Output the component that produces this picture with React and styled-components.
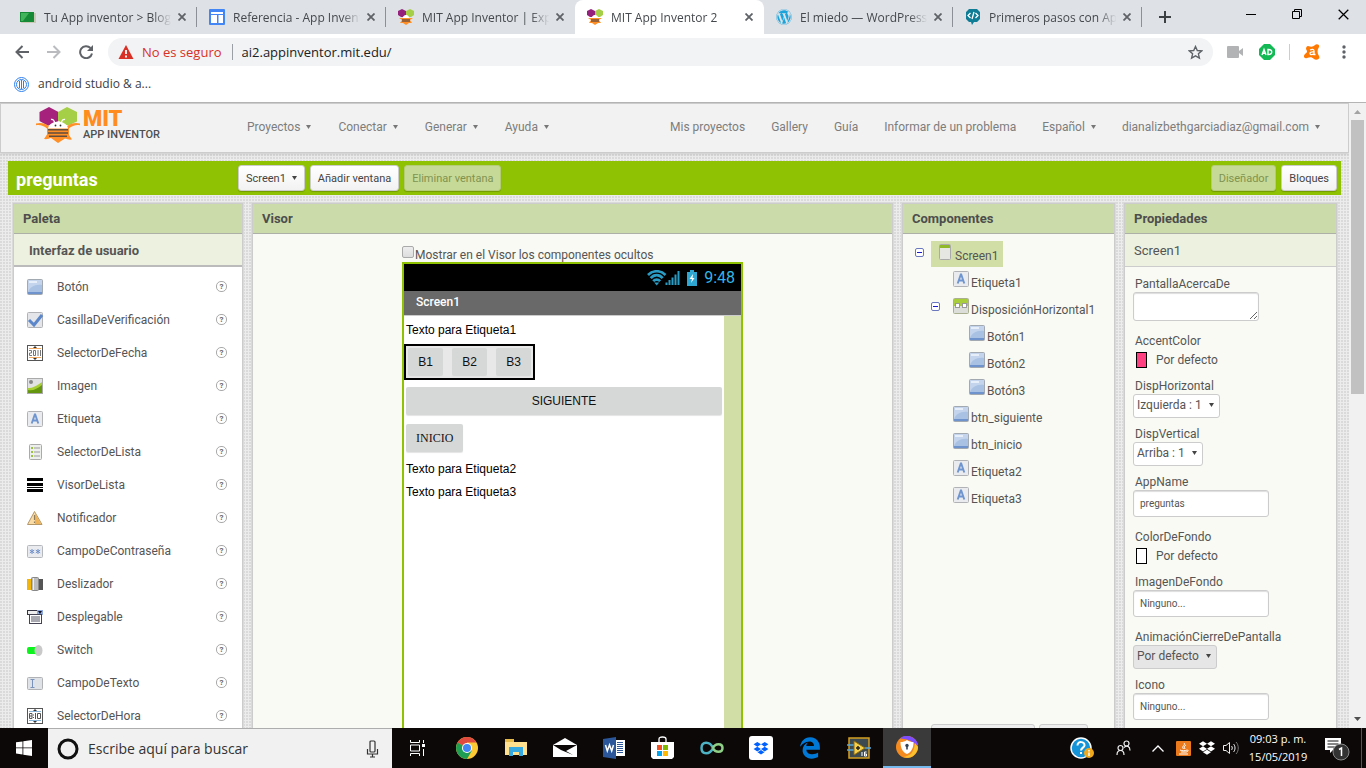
import React, { useState } from 'react';
import styled, { createGlobalStyle } from 'styled-components';
import { FaDropbox, FaEdgeLegacy, FaWordpress } from 'react-icons/fa';

const GlobalStyle = createGlobalStyle`
  * { box-sizing: border-box; }
  body {
    margin: 0;
    overflow: hidden;
    font-family: Roboto, sans-serif;
    font-size: 12px;
    color: #555;
  }
  button, input, select, textarea { font-family: inherit; font-size: inherit; color: inherit; }
  button { border: none; background: none; padding: 0; cursor: pointer; }
  svg { display: block; flex: none; }
  a { color: inherit; text-decoration: none; }
  ul { list-style: none; margin: 0; padding: 0; }
`;

const Desktop = styled.div`
  display: flex;
  flex-direction: column;
  height: 100vh;
`;

/* ---------- browser ---------- */

const Browser = styled.header`
  flex: none;
  font-family: "Open Sans", sans-serif;
  background: #fff;
  border-bottom: 1px solid #b4b4b4;
`;
const TabStrip = styled.div`
  display: flex;
  align-items: center;
  height: 34px;
  padding-left: 8px;
  background: #dee1e6;
`;
const TabBox = styled.div`
  display: flex;
  align-items: center;
  flex: 0 1 189px;
  min-width: 0;
  height: 34px;
  padding: 0 9px 0 12px;
  border-radius: ${p => (p.$active ? '8px 8px 0 0' : '0')};
  background: ${p => (p.$active ? '#fff' : 'linear-gradient(#8c9096, #8c9096) right center / 1px 20px no-repeat')};
  ${p => p.$plain && 'background: none;'}
`;
const TabTitle = styled.button`
  flex: 1;
  min-width: 0;
  margin: 0 2px 0 8px;
  overflow: hidden;
  white-space: nowrap;
  text-align: left;
  color: #45494d;
  mask-image: linear-gradient(to right, #000 84%, transparent 98%);
`;
const IconButton = styled.button`
  display: flex;
  align-items: center;
  justify-content: center;
  flex: none;
  width: ${p => p.$w || 32}px;
  height: ${p => p.$h || 28}px;
`;
const WindowButtons = styled.div`
  display: flex;
  margin-left: auto;
  align-self: flex-start;
`;
const Toolbar = styled.div`
  display: flex;
  align-items: center;
  height: 36px;
  padding: 0 6px;
`;
const Omnibox = styled.div`
  display: flex;
  align-items: center;
  flex: 1;
  height: 28px;
  margin: 0 6px;
  padding: 0 6px 0 10px;
  border-radius: 14px;
  background: #f1f3f4;
  font-size: 13px;
`;
const NotSecure = styled.span`
  margin-left: 8px;
  padding-right: 10px;
  border-right: 1px solid #9aa0a6;
  line-height: 16px;
  color: #d93025;
`;
const Url = styled.input`
  flex: 1;
  min-width: 0;
  padding: 0 0 0 9px;
  border: none;
  outline: none;
  background: none;
  color: #202124;
`;
const Divider = styled.span`
  width: 1px;
  height: 16px;
  margin: 0 6px;
  background: #cbcdd0;
`;
const Bookmarks = styled.nav`
  height: 32px;
  padding: 6px 14px 0;
`;
const Bookmark = styled.a`
  display: flex;
  align-items: center;
  gap: 9px;
  line-height: 16px;
  color: #3c4043;
`;

/* ---------- page ---------- */

const Viewport = styled.div`
  display: flex;
  flex: 1;
  min-height: 0;
`;
const Page = styled.div`
  display: flex;
  flex-direction: column;
  flex: 1;
  min-width: 0;
  overflow: hidden;
  background:
    radial-gradient(circle at 1px 1px, #dadada 1px, transparent 1px) 0 0 / 3px 3px,
    #ececec;
`;
const Scrollbar = styled.div`
  display: flex;
  flex-direction: column;
  align-items: center;
  justify-content: space-between;
  flex: none;
  width: 17px;
  padding: 7px 0;
  background: #f1f1f1;
`;
const Thumb = styled.div`
  flex: none;
  width: 13px;
  height: 274px;
  margin: 6px 0 auto;
  background: #c1c1c1;
`;
const Header = styled.div`
  display: flex;
  align-items: center;
  flex: none;
  height: 50px;
  padding: 0 28px 2px 35px;
  border: 1px solid #ccc;
  background: #f2f2f2;
  box-shadow: 0 1px 3px rgba(0, 0, 0, 0.15);
`;
const Brand = styled.a`
  display: flex;
  align-items: center;
  align-self: flex-start;
  gap: 3px;
  width: 211px;
  padding-top: 3px;
`;
const BrandText = styled.span`
  display: flex;
  flex-direction: column;
  color: #4f4f4f;
  font-size: 11px;
  font-weight: 500;
  line-height: 12px;
`;
const BrandName = styled.span`
  color: #ff8c1e;
  font-size: 22px;
  font-weight: 900;
  line-height: 20px;
`;
const Menu = styled.nav`
  display: flex;
  align-items: center;
  gap: ${p => p.$gap}px;
  color: #7d7d7d;
  ${p => p.$right && 'margin-left: auto;'}
`;
const MenuButton = styled.button`
  display: flex;
  align-items: center;
  gap: 6px;
  white-space: nowrap;
`;
const ProjectBar = styled.div`
  display: flex;
  align-items: center;
  flex: none;
  gap: 5px;
  height: 34px;
  margin: 8px 8px;
  padding: 0 4px 0 8px;
  background: #8fc202;
`;
const ProjectName = styled.h1`
  width: 217px;
  margin: 0;
  padding-top: 4px;
  color: #fff;
  font-size: 18px;
  line-height: 20px;
`;
const BarButton = styled.button`
  display: flex;
  align-items: center;
  justify-content: center;
  gap: 6px;
  height: 26px;
  padding: 0 7px;
  border: 1px solid #ccc;
  border-radius: 3px;
  background: linear-gradient(#fff, #f2f2f2);
  box-shadow: 0 1px 1px rgba(0, 0, 0, 0.2);
  color: #444;
  font-size: 11px;
  white-space: nowrap;
  &:disabled {
    border-color: #b4cc78;
    background: #c7d996;
    color: #7f9350;
    cursor: default;
  }
`;
const BarRight = styled.div`
  display: flex;
  gap: 5px;
  margin-left: auto;
`;

const Columns = styled.main`
  display: flex;
  flex: 1;
  gap: 9px;
  min-height: 0;
  padding: 0 12px 0 13px;
`;
const Panel = styled.section`
  display: flex;
  flex-direction: column;
  flex: ${p => (p.$width ? `0 0 ${p.$width}px` : '1')};
  min-width: 0;
  overflow: hidden;
  border: 1px solid #ccc;
  border-bottom: none;
  background: #f8faf3;
  box-shadow: 0 0 0 1px #dadada;
`;
const PanelTitle = styled.h2`
  flex: none;
  height: 30px;
  margin: 0;
  padding: 0 9px;
  border-bottom: 1px solid #adb0a6;
  background: #cbdba9;
  color: #4d4d4d;
  font-size: 13px;
  font-weight: 700;
  line-height: 29px;
`;
const SubTitle = styled.h3`
  flex: none;
  height: 33px;
  margin: 0;
  padding: 0 ${p => (p.$bold ? 15 : 9)}px;
  border-bottom: ${p => (p.$bold ? '2px solid #bbb' : '1px solid #ccc')};
  background: #ecf1e0;
  color: #555;
  font-size: 13px;
  font-weight: ${p => (p.$bold ? 700 : 400)};
  line-height: 33px;
`;
const PaletteList = styled.ul`
  flex: 1;
  min-height: 0;
  padding: 3px 15px 0 13px;
  overflow: hidden;
  background: #fff;
`;
const PaletteRow = styled.li`
  display: flex;
  align-items: center;
  gap: 14px;
  height: 33px;
`;
const HelpButton = styled.button`
  width: 11px;
  height: 11px;
  margin-left: auto;
  border: 1px solid #aaa;
  border-radius: 5px;
  color: #666;
  font-size: 8px;
  font-weight: 700;
  line-height: 9px;
`;

/* ---------- viewer ---------- */

const ViewerBody = styled.div`
  display: flex;
  flex-direction: column;
  align-items: center;
  flex: 1;
  min-height: 0;
  padding-top: 12px;
`;
const Mock = styled.div`
  display: flex;
  flex-direction: column;
  flex: 1;
  width: 341px;
`;
const HiddenToggle = styled.label`
  display: flex;
  flex: none;
  gap: 1px;
  height: 16px;
  line-height: 18px;
  input {
    appearance: none;
    width: 12px;
    height: 12px;
    margin: 0;
    border: 1px solid #aaa;
    border-radius: 2px;
    background: linear-gradient(#eee, #ddd);
  }
`;
const Phone = styled.div`
  display: flex;
  flex-direction: column;
  flex: 1;
  border: 2px solid #8fc202;
  border-bottom: none;
  background: #fff;
`;
const StatusBar = styled.div`
  display: flex;
  align-items: center;
  justify-content: flex-end;
  gap: 7px;
  height: 27px;
  padding-right: 6px;
  background: #000;
  color: #33b5e5;
  font-size: 16px;
`;
const TitleBar = styled.div`
  height: 24px;
  padding-left: 12px;
  background: #696969;
  color: #fff;
  font-weight: 500;
  line-height: 22px;
`;
const Screen = styled.div`
  display: flex;
  flex: 1;
  border-top: 1px solid #ccc;
`;
const ScreenContent = styled.div`
  display: flex;
  flex-direction: column;
  align-items: flex-start;
  flex: 1;
  padding-top: 3px;
  color: #000;
  font-family: "Liberation Sans", sans-serif;
`;
const Gutter = styled.div`
  width: 17px;
  background: #d1dfa6;
`;
const MockLabel = styled.p`
  margin: 0;
  padding: 0 2px;
  line-height: 23px;
`;
const MockRow = styled.div`
  display: flex;
  gap: 9px;
  margin: 2px 0 7px;
  padding: 2px;
  border: 2px solid #000;
  background: #e8e8e8;
`;
const MockButton = styled.button`
  min-width: 35px;
  width: ${p => (p.$fill ? 'calc(100% - 4px)' : 'auto')};
  height: 28px;
  margin: ${p => (p.$after ? `0 2px ${p.$after}px` : '0')};
  padding: 0 10px;
  border-radius: 2px;
  background: #d6d8d7;
  box-shadow: 0 1px 1px #e4e4e4;
  color: #111;
  ${p => p.$serif && 'font-family: "Liberation Serif", serif;'}
`;

/* ---------- component tree ---------- */

const Tree = styled.ul`
  flex: none;
  height: 490px;
  padding: 7px 12px 0;
`;
const TreeRow = styled.div`
  display: flex;
  height: 27px;
  padding-left: ${p => p.$level * 16}px;
`;
const Toggle = styled.button`
  display: flex;
  flex: none;
  width: 16px;
  padding-top: 7px;
`;
const TreeNode = styled.button`
  display: flex;
  gap: 2px;
  height: 26px;
  padding: 3px 5px 0 6px;
  background: ${p => (p.$selected ? '#d1dfa6' : 'none')};
  line-height: 24px;
`;
const TreeActions = styled.div`
  display: flex;
  flex: none;
  gap: 4px;
  padding-left: 28px;
`;
const ActionButton = styled.button`
  width: ${p => p.$width}px;
  height: 26px;
  border: 1px solid #ccc;
  border-radius: 3px;
  background: #eee;
`;

/* ---------- properties ---------- */

const Properties = styled.form`
  padding: 9px 8px 0;
`;
const Property = styled.div`
  display: flex;
  flex-direction: column;
  align-items: flex-start;
  margin-bottom: ${p => (p.$boxed ? 12 : 8)}px;
`;
const PropertyName = styled.label`
  padding-left: 2px;
  line-height: 16px;
`;
const TextBox = styled.input`
  width: 136px;
  height: 27px;
  padding: 0 6px;
  border: 1px solid #ccc;
  border-radius: 3px;
  background: #fff;
  box-shadow: inset 0 1px 1px #ddd;
  font-size: 10px;
`;
const TextArea = styled.textarea`
  display: block;
  width: 126px;
  height: 29px;
  border: 1px solid #ccc;
  border-radius: 3px;
  box-shadow: inset 0 1px 1px #ddd;
`;
const SelectBox = styled.span`
  position: relative;
  select {
    display: block;
    appearance: none;
    height: 24px;
    padding: 0 17px 2px 3px;
    border: 1px solid #ccc;
    border-radius: 3px;
    background: ${p => (p.$grey ? '#e6e6e6' : '#fff')};
  }
  svg {
    position: absolute;
    top: 9px;
    right: 6px;
    pointer-events: none;
  }
`;
const ColorPick = styled.button`
  display: flex;
  align-items: center;
  gap: 9px;
  height: 21px;
  padding-left: 3px;
`;
const Swatch = styled.span`
  width: 11px;
  height: 16px;
  border: 1px solid #000;
  background: ${p => p.$color};
`;

/* ---------- taskbar ---------- */

const Taskbar = styled.footer`
  display: flex;
  flex: none;
  height: 40px;
  background: #0c0808;
  color: #fff;
  font-family: "Open Sans", sans-serif;
`;
const TaskButton = styled.button`
  display: flex;
  align-items: center;
  justify-content: center;
  flex: none;
  width: ${p => p.$w || 49}px;
  height: 40px;
  color: #fff;
  ${p => p.$active && `
    background: #3a3a3a;
    border-bottom: 2px solid #76b9ed;
  `}
`;
const SearchBox = styled.label`
  display: flex;
  align-items: center;
  flex: none;
  gap: 9px;
  width: 344px;
  padding: 0 13px 0 9px;
  border-top: 1px solid #adadad;
  background: #f1f1f1;
  input {
    flex: 1;
    min-width: 0;
    padding: 0;
    border: none;
    outline: none;
    background: none;
    color: #222;
    font-size: 14px;
  }
  input::placeholder { color: #333; opacity: 1; }
`;
const Tray = styled.div`
  display: flex;
  align-items: center;
  margin-left: auto;
`;
const Clock = styled.button`
  width: 70px;
  color: #fff;
  font-size: 11px;
  line-height: 18px;
`;
const PeekEdge = styled.span`
  width: 5px;
  height: 40px;
  border-left: 1px solid #555;
`;

/* ---------- drawings ---------- */

const Caret = ({ color = '#777' }) => (
  <svg width="5" height="4" viewBox="0 0 5 4"><path d="M0 0h5L2.500 4z" fill={color} /></svg>
);
const Cross = ({ size = 8, width = 1.800, color = '#5f6368' }) => (
  <svg width={size} height={size} viewBox="0 0 8 8" stroke={color} strokeWidth={width}><path d="M.5.5l7 7M7.500.5l-7 7" /></svg>
);

const BeeLogo = ({ size = 44 }) => (
  <svg width={size} height={size * 36 / 44} viewBox="0 0 44 36">
    <path d="M13 0l9.500 5v9l-8 4.500h-3L3.500 14V5z" fill="#a6217c" />
    <path d="M31 0l10 5v9.500L33 18h-3l-8-4.500V5z" fill="#a5cf47" />
    <path d="M0 16.500c5-1.500 9 0 13 2.500h18c4-2.500 8-4 13-2.500v1.800c-4-.8-8 .7-11 3.200v6.500l3 4.500c-3 .5-5-.5-7-1L22 36l-7-5c-2 .5-4 1.500-7 1l3-4.500V21.500c-3-2.500-7-4-11-3.200z" fill="#ff8f26" />
    <path d="M12 21.500c1-9 19-9 20 0z" fill="#fff" />
    <path d="M15 12.500c2-.5 3.500 1 3.500 3.500M29 12.500c-2-.5-3.500 1-3.500 3.500" stroke="#fff" strokeWidth="1.400" fill="none" />
    <circle cx="19.500" cy="18.500" r=".9" fill="#333" /><circle cx="24.500" cy="18.500" r=".9" fill="#333" />
    <path d="M12 22.700h20M12 26h20M13 29.300h18" stroke="#5f4d3d" strokeWidth="1.400" />
  </svg>
);

const FAVICONS = {
  blog: (
    <svg width="16" height="16" viewBox="0 0 16 16">
      <rect x="1" y="4" width="15" height="10" fill="#c9c9b5" />
      <rect x="0" y="3" width="14" height="10" fill="#168a36" />
      <path d="M1 4h8L3 12H1z" fill="#42b55c" />
    </svg>
  ),
  sites: (
    <svg width="16" height="16" viewBox="0 0 16 16">
      <rect width="16" height="16" rx="1" fill="#4285f4" />
      <path d="M2 3h12v2H2zM2 6h6v8H2zM9.500 6H14v8H9.500z" fill="#fff" />
    </svg>
  ),
  bee: (
    <svg width="16" height="16" viewBox="0 0 16 16">
      <path d="M0 2l4-2 4 2v4L5 8H3L0 6z" fill="#94217c" />
      <path d="M8 2l4-2 4 2v4l-3 2h-2L8 6z" fill="#a5cf47" />
      <path d="M1 9h14l-3 2 2 3h-3l-3 2-3-2H2l2-3z" fill="#ff8f26" />
      <path d="M5 9c0-4 6-4 6 0z" fill="#fff" />
      <path d="M4 10h8v3H4z" fill="#9a6134" />
    </svg>
  ),
  wordpress: <FaWordpress size={16} color="#1ba3dc" />,
  code: (
    <svg width="16" height="16" viewBox="0 0 16 16">
      <path d="M4 0h8l3 3v7l-3 3h-3l-2 3-1-3H4l-3-3V3z" fill="#0f7d96" />
      <path d="M5.500 4L3 6.500 5.500 9M10.500 4L13 6.500 10.500 9M9 3L7 10" stroke="#fff" strokeWidth="1.300" fill="none" />
    </svg>
  ),
};

const GLYPHS = {
  button: (
    <g>
      <rect x=".5" y=".5" width="15" height="15" rx="1" fill="#a9c1e3" stroke="#a3a9b0" />
      <path d="M1 1h14v5C8 5 3 8 1 13z" fill="#c3d4ec" />
      <path d="M2 2h8v2H2z" fill="#e6eef9" />
      <path d="M1 13h14v2H1z" fill="#6f93cd" />
    </g>
  ),
  label: (
    <g>
      <rect x=".5" y=".5" width="15" height="15" rx="1" fill="#e9ebee" stroke="#b0b2b5" />
      <path d="M4.700 12.500L7.800 3.500h.4l3.100 9M5.800 9.500h4.400" stroke="#6f95d0" strokeWidth="1.900" fill="none" />
    </g>
  ),
  check: (
    <g>
      <rect x=".5" y=".5" width="15" height="15" rx="1" fill="#e3e5e8" stroke="#b0b2b5" />
      <path d="M2 8l5 5 8-10" stroke="#5b86c9" strokeWidth="3" fill="none" />
    </g>
  ),
  date: (
    <g fill="none">
      <rect x=".5" y=".5" width="15" height="15" fill="#fff" stroke="#555" />
      <path d="M2 3.500h12M2 12.500h12" stroke="#f0a860" />
      <path d="M6 3l2-2 2 2zM6 13l2 2 2-2z" fill="#333" />
      <path d="M2 5.500h2.500v2.500H2.500v2.500H5M6.500 5.500h2v5h-2zM11 5v6M13.500 5v6" stroke="#777" />
    </g>
  ),
  image: (
    <g>
      <rect x=".5" y=".5" width="15" height="15" fill="#e0e2e3" stroke="#aaa" />
      <circle cx="4" cy="4" r="2" fill="#888" />
      <path d="M1 10c5 0 8-2 14-6v11H1z" fill="#a8cf35" />
      <path d="M1 12c5 1 9-1 14-5v8H1z" fill="#64970f" />
    </g>
  ),
  list: (
    <g>
      <rect x="2.500" y=".5" width="12" height="15" rx="1" fill="#edefed" stroke="#aaa" />
      <path d="M4 3h2v2H4zM4 7h2v2H4zM4 11h2v2H4z" fill="#9cc33b" />
      <path d="M7 4h6M7 8h6M7 12h6" stroke="#999" />
    </g>
  ),
  listView: <path d="M0 1h16v3H0zM0 6h16v3H0zM0 10h16v1H0zM0 12h16v3H0z" fill="#000" />,
  warning: (
    <g>
      <path d="M7.500 1.500L15 14.500H.5z" fill="#f9dca6" stroke="#b59868" />
      <path d="M8 3l6 11H8z" fill="#efb45a" />
      <path d="M7.500 5v5M7.500 11.500v1.500" stroke="#8f7c5b" strokeWidth="1.200" />
    </g>
  ),
  password: (
    <g>
      <rect x=".5" y="2.500" width="15" height="12" rx="1" fill="#e9ebee" stroke="#b5b8bc" />
      <path d="M5 6v5M2.800 7.200l4.400 2.600M7.200 7.200L2.800 9.800M11 6v5M8.800 7.200l4.400 2.600M13.200 7.200L8.800 9.800" stroke="#6f8fc9" />
    </g>
  ),
  slider: (
    <g>
      <rect x="0" y="3" width="5" height="11" fill="#f2b50c" />
      <rect x="11" y="3" width="5" height="11" fill="#555" />
      <rect x="4.500" y="1.500" width="7" height="13" rx="1" fill="#bbb" stroke="#888" />
      <path d="M6.500 2v12" stroke="#eee" />
    </g>
  ),
  spinner: (
    <g>
      <rect x=".5" y="1.500" width="14" height="4" fill="#eee" stroke="#334" />
      <rect x="10" y="1" width="6" height="5" fill="#8fa9dd" />
      <path d="M11 2h4l-2 3z" fill="#112" />
      <rect x="2.500" y="5.500" width="12" height="9" fill="#fff" stroke="#445" />
      <path d="M4 8h9M4 10h9M4 12h9" stroke="#556" />
    </g>
  ),
  toggle: (
    <g>
      <rect x="0" y="5" width="11" height="7" rx="2" fill="#0bf41b" />
      <ellipse cx="11.500" cy="8.500" rx="4" ry="5.500" fill="#c9c9c9" />
    </g>
  ),
  textBox: (
    <g>
      <rect x=".5" y="2.500" width="15" height="12" rx="1" fill="#dfe2e6" stroke="#b0b2b5" />
      <path d="M3.500 4.500h4M5.500 4.500v8M3.500 12.500h4" stroke="#7a93bd" />
    </g>
  ),
  time: (
    <g fill="none">
      <rect x=".5" y=".5" width="15" height="15" fill="#fff" stroke="#555" />
      <path d="M2 3.500h12M2 12.500h12" stroke="#89b4d8" />
      <path d="M6 3l2-2 2 2zM6 13l2 2 2-2z" fill="#333" />
      <path d="M2.500 5.500h2.500v5H2.500zM2.500 8h2.500M6.500 6.500v1M6.500 9v1M8.500 5v6M10.500 5.500h3v5h-3z" stroke="#555" />
    </g>
  ),
  screen: (
    <g>
      <rect x="2.500" y=".5" width="11" height="15" rx="1" fill="#e6e6e2" stroke="#aaa" />
      <path d="M3 1h10v3H3z" fill="#8fb927" />
    </g>
  ),
  arrangement: (
    <g>
      <rect x=".5" y=".5" width="15" height="15" rx="1" fill="#dcdeda" stroke="#aab08f" />
      <path d="M1 1h14v7H1z" fill="#a9ce3c" />
      <rect x="2.500" y="5.500" width="4" height="4" fill="#fff" stroke="#999" />
      <rect x="9.500" y="5.500" width="4" height="4" fill="#fff" stroke="#999" />
    </g>
  ),
};
const Glyph = ({ name }) => <svg width="16" height="16" viewBox="0 0 16 16">{GLYPHS[name]}</svg>;

/* ---------- data ---------- */

const TABS = [
  { icon: 'blog', title: 'Tu App inventor > Blog' },
  { icon: 'sites', title: 'Referencia - App Invent' },
  { icon: 'bee', title: 'MIT App Inventor | Expl', plain: true },
  { icon: 'bee', title: 'MIT App Inventor 2', active: true },
  { icon: 'wordpress', title: 'El miedo — WordPress.' },
  { icon: 'code', title: 'Primeros pasos con App' },
];

const PALETTE = [
  ['button', 'Botón'],
  ['check', 'CasillaDeVerificación'],
  ['date', 'SelectorDeFecha'],
  ['image', 'Imagen'],
  ['label', 'Etiqueta'],
  ['list', 'SelectorDeLista'],
  ['listView', 'VisorDeLista'],
  ['warning', 'Notificador'],
  ['password', 'CampoDeContraseña'],
  ['slider', 'Deslizador'],
  ['spinner', 'Desplegable'],
  ['toggle', 'Switch'],
  ['textBox', 'CampoDeTexto'],
  ['time', 'SelectorDeHora'],
];

const NODES = [
  { name: 'Screen1', icon: 'screen', level: 0, open: true },
  { name: 'Etiqueta1', icon: 'label', level: 1 },
  { name: 'DisposiciónHorizontal1', icon: 'arrangement', level: 1, open: true },
  { name: 'Botón1', icon: 'button', level: 2 },
  { name: 'Botón2', icon: 'button', level: 2 },
  { name: 'Botón3', icon: 'button', level: 2 },
  { name: 'btn_siguiente', icon: 'button', level: 1 },
  { name: 'btn_inicio', icon: 'button', level: 1 },
  { name: 'Etiqueta2', icon: 'label', level: 1 },
  { name: 'Etiqueta3', icon: 'label', level: 1 },
];

const PROPERTIES = [
  { name: 'PantallaAcercaDe', type: 'area' },
  { name: 'AccentColor', type: 'color', value: '#ff4081' },
  { name: 'DispHorizontal', type: 'select', value: 'Izquierda : 1' },
  { name: 'DispVertical', type: 'select', value: 'Arriba : 1' },
  { name: 'AppName', type: 'text', value: 'preguntas' },
  { name: 'ColorDeFondo', type: 'color', value: '#fff' },
  { name: 'ImagenDeFondo', type: 'text', value: 'Ninguno...' },
  { name: 'AnimaciónCierreDePantalla', type: 'select', value: 'Por defecto', grey: true },
  { name: 'Icono', type: 'text', value: 'Ninguno...' },
];

/* ---------- parts ---------- */

function BrowserChrome() {
  return (
    <Browser>
      <TabStrip>
        {TABS.map(tab => (
          <TabBox key={tab.title} $active={tab.active} $plain={tab.plain}>
            {FAVICONS[tab.icon]}
            <TabTitle>{tab.title}</TabTitle>
            <IconButton $w={12} aria-label="Cerrar pestaña"><Cross /></IconButton>
          </TabBox>
        ))}
        <IconButton $w={46} aria-label="Nueva pestaña">
          <svg width="12" height="12" viewBox="0 0 12 12"><path d="M6 0v12M0 6h12" stroke="#3c4043" strokeWidth="2" /></svg>
        </IconButton>
        <WindowButtons>
          <IconButton $w={46} aria-label="Minimizar">
            <svg width="10" height="10" viewBox="0 0 10 10"><path d="M0 5.500h10" stroke="#000" /></svg>
          </IconButton>
          <IconButton $w={46} aria-label="Restaurar">
            <svg width="10" height="10" viewBox="0 0 10 10" fill="none" stroke="#000"><path d="M.5 2.500h7v7h-7zM2.500 2.500v-2h7v7h-2" /></svg>
          </IconButton>
          <IconButton $w={46} aria-label="Cerrar"><Cross size={11} width={0.9} color="#000" /></IconButton>
        </WindowButtons>
      </TabStrip>
      <Toolbar>
        <IconButton aria-label="Atrás">
          <svg width="14" height="14" viewBox="0 0 14 14" fill="none" stroke="#5f6368" strokeWidth="2"><path d="M14 7H1.500M7.500 1l-6 6 6 6" /></svg>
        </IconButton>
        <IconButton aria-label="Adelante">
          <svg width="14" height="14" viewBox="0 0 14 14" fill="none" stroke="#b9bbbe" strokeWidth="2"><path d="M0 7h12.500M6.500 1l6 6-6 6" /></svg>
        </IconButton>
        <IconButton aria-label="Recargar">
          <svg width="14" height="14" viewBox="0 0 14 14"><path d="M11.500 3A6 6 0 1 0 13 8.500" stroke="#5f6368" strokeWidth="2" fill="none" /><path d="M14 0v6H8z" fill="#5f6368" /></svg>
        </IconButton>
        <Omnibox>
          <svg width="16" height="14" viewBox="0 0 16 14"><path d="M8 0l7.500 14H.5z" fill="#d93025" /><path d="M8 5v4M8 10.500v2" stroke="#fff" strokeWidth="1.800" /></svg>
          <NotSecure>No es seguro</NotSecure>
          <Url aria-label="Dirección" defaultValue="ai2.appinventor.mit.edu/" />
          <IconButton $w={24} aria-label="Añadir a marcadores">
            <svg width="15" height="15" viewBox="0 0 15 15" fill="none" stroke="#5f6368" strokeWidth="1.400"><path d="M7.500 1.500l1.800 4 4.400.4-3.300 2.900 1 4.300-3.900-2.300-3.900 2.300 1-4.300L1.300 5.900l4.400-.4z" /></svg>
          </IconButton>
        </Omnibox>
        <IconButton aria-label="Cámara">
          <svg width="16" height="12" viewBox="0 0 16 12" fill="#b1b3b5"><rect width="12" height="12" rx="1" /><path d="M12 5l4-3v8l-4-3z" /></svg>
        </IconButton>
        <IconButton aria-label="Bloqueador">
          <svg width="16" height="16" viewBox="0 0 16 16"><path d="M5 0h6l5 5v6l-5 5H5l-5-5V5z" fill="#13b955" /><path d="M3 11l2-5.500L7 11M3.800 9.200h2.500M9 5.500v5c5 .5 5-5.500 0-5z" stroke="#fff" strokeWidth="1.400" fill="none" /></svg>
        </IconButton>
        <Divider />
        <IconButton aria-label="Avast">
          <svg width="16" height="16" viewBox="0 0 16 16"><path d="M4 2c3 1 5 1 7-1 2-2 5 0 4 2-2 3-2 6 0 9 2 3-3 5-5 3-2-2-4-2-7-1-3 1-4-2-2-4 3-2 2-3 1-5 0-2 1-3 2-3z" fill="#ff7800" /><path d="M6 6c2-1 4-1 4 1v3.500h1.500M10 8c-5-1-5 3-2 2.500 1 0 2-1 2-1.500" stroke="#fff" strokeWidth="1.300" fill="none" /></svg>
        </IconButton>
        <IconButton aria-label="Menú">
          <svg width="4" height="14" viewBox="0 0 4 14" fill="#5f6368"><circle cx="2" cy="2" r="1.700" /><circle cx="2" cy="7" r="1.700" /><circle cx="2" cy="12" r="1.700" /></svg>
        </IconButton>
      </Toolbar>
      <Bookmarks>
        <Bookmark href="#">
          <svg width="15" height="15" viewBox="0 0 15 15" fill="none" stroke="#2f80ed"><circle cx="7.500" cy="7.500" r="7" /><circle cx="7.500" cy="7.500" r="5" /><path d="M5.500 4v7M7.500 3v9M9.500 4v7" /></svg>
          android studio &amp; a...
        </Bookmark>
      </Bookmarks>
    </Browser>
  );
}

function AppHeader() {
  return (
    <Header>
      <Brand href="#">
        <BeeLogo />
        <BrandText>
          <BrandName>MIT</BrandName>
          APP INVENTOR
        </BrandText>
      </Brand>
      <Menu $gap={27}>
        {['Proyectos', 'Conectar', 'Generar', 'Ayuda'].map(name => (
          <MenuButton key={name}>{name}<Caret /></MenuButton>
        ))}
      </Menu>
      <Menu $gap={26} $right>
        <a href="#">Mis proyectos</a>
        <a href="#">Gallery</a>
        <a href="#">Guía</a>
        <a href="#">Informar de un problema</a>
        <MenuButton>Español<Caret /></MenuButton>
        <MenuButton>dianalizbethgarciadiaz@gmail.com<Caret /></MenuButton>
      </Menu>
    </Header>
  );
}

function Viewer() {
  return (
    <Panel>
      <PanelTitle>Visor</PanelTitle>
      <ViewerBody>
        <Mock>
          <HiddenToggle>
            <input type="checkbox" />
            Mostrar en el Visor los componentes ocultos
          </HiddenToggle>
          <Phone>
            <StatusBar>
              <svg width="33" height="16" viewBox="0 0 33 16" fill="none" stroke="#2a9cc4" strokeWidth="2.700">
                <path d="M1 5c5-5 12.500-5 17.500 0M3.700 8.200c3.500-4 8.500-4 12 0M6.200 11.200c2-2.200 5-2.200 7 0" />
                <path d="M7.200 12.500l2.500 3 2.500-3z" fill="#2a9cc4" stroke="none" />
                <path d="M19.500 15v-2.500M22.500 15v-5M25.500 15V7.500M28.500 15V4.500M31.500 15V1" strokeWidth="2" />
              </svg>
              <svg width="10" height="16" viewBox="0 0 10 16"><path d="M3 0h4v2h3v14H0V2h3z" fill="#2fa6d2" /><path d="M6 4L2.500 9H5l-1 4 3.500-5H5.500z" fill="#fff" /></svg>
              9:48
            </StatusBar>
            <TitleBar>Screen1</TitleBar>
            <Screen>
              <ScreenContent>
                <MockLabel>Texto para Etiqueta1</MockLabel>
                <MockRow>
                  <MockButton>B1</MockButton>
                  <MockButton>B2</MockButton>
                  <MockButton>B3</MockButton>
                </MockRow>
                <MockButton $fill $after={9}>SIGUIENTE</MockButton>
                <MockButton $serif $after={6}>INICIO</MockButton>
                <MockLabel>Texto para Etiqueta2</MockLabel>
                <MockLabel>Texto para Etiqueta3</MockLabel>
              </ScreenContent>
              <Gutter />
            </Screen>
          </Phone>
        </Mock>
      </ViewerBody>
    </Panel>
  );
}

function ComponentTree() {
  const [selected, setSelected] = useState('Screen1');
  return (
    <Panel $width={213}>
      <PanelTitle>Componentes</PanelTitle>
      <Tree>
        {NODES.map(node => (
          <li key={node.name}>
            <TreeRow $level={node.level}>
              <Toggle as={node.open ? 'button' : 'span'} aria-label={node.open ? 'Contraer' : undefined}>
                {node.open && (
                  <svg width="9" height="9" viewBox="0 0 9 9"><rect x=".5" y=".5" width="8" height="8" rx="1.500" fill="#fff" stroke="#6b78bd" /><path d="M2 4.500h5" stroke="#1a1ad0" /></svg>
                )}
              </Toggle>
              <TreeNode $selected={node.name === selected} onClick={() => setSelected(node.name)}>
                <Glyph name={node.icon} />
                {node.name}
              </TreeNode>
            </TreeRow>
          </li>
        ))}
      </Tree>
      <TreeActions>
        <ActionButton $width={104} aria-label="Cambiar nombre" />
        <ActionButton $width={49} aria-label="Borrar" />
      </TreeActions>
    </Panel>
  );
}

function PropertyEditor({ property }) {
  const { name, type, value, grey } = property;
  if (type === 'area') return <TextArea id={name} />;
  if (type === 'text') return <TextBox id={name} defaultValue={value} />;
  if (type === 'color') {
    return <ColorPick type="button" id={name}><Swatch $color={value} />Por defecto</ColorPick>;
  }
  return (
    <SelectBox $grey={grey}>
      <select id={name}><option>{value}</option></select>
      <Caret color="#444" />
    </SelectBox>
  );
}

export default function App() {
  return (
    <Desktop>
      <GlobalStyle />
      <BrowserChrome />
      <Viewport>
        <Page>
          <AppHeader />
          <ProjectBar>
            <ProjectName>preguntas</ProjectName>
            <BarButton>Screen1<Caret color="#444" /></BarButton>
            <BarButton>Añadir ventana</BarButton>
            <BarButton disabled>Eliminar ventana</BarButton>
            <BarRight>
              <BarButton disabled>Diseñador</BarButton>
              <BarButton>Bloques</BarButton>
            </BarRight>
          </ProjectBar>
          <Columns>
            <Panel $width={230}>
              <PanelTitle>Paleta</PanelTitle>
              <SubTitle $bold>Interfaz de usuario</SubTitle>
              <PaletteList>
                {PALETTE.map(([icon, name]) => (
                  <PaletteRow key={name}>
                    <Glyph name={icon} />
                    {name}
                    <HelpButton aria-label={`Ayuda de ${name}`}>?</HelpButton>
                  </PaletteRow>
                ))}
              </PaletteList>
            </Panel>
            <Viewer />
            <ComponentTree />
            <Panel $width={213}>
              <PanelTitle>Propiedades</PanelTitle>
              <SubTitle>Screen1</SubTitle>
              <Properties>
                {PROPERTIES.map(property => (
                  <Property key={property.name} $boxed={property.type === 'text' || property.type === 'area'}>
                    <PropertyName htmlFor={property.name}>{property.name}</PropertyName>
                    <PropertyEditor property={property} />
                  </Property>
                ))}
              </Properties>
            </Panel>
          </Columns>
        </Page>
        <Scrollbar>
          <svg width="7" height="4" viewBox="0 0 7 4"><path d="M0 4h7L3.500 0z" fill="#a3a3a3" /></svg>
          <Thumb />
          <svg width="7" height="4" viewBox="0 0 7 4"><path d="M0 0h7L3.500 4z" fill="#505050" /></svg>
        </Scrollbar>
      </Viewport>
      <Taskbar>
        <TaskButton $w={48} aria-label="Inicio">
          <svg width="16" height="16" viewBox="0 0 16 16" fill="#fff"><path d="M0 2.300l6.500-.9v6.100H0zM7.300 1.200L16 0v7.500H7.300zM0 8.300h6.500v6.200L0 13.600zM7.300 8.300H16V16l-8.700-1.300z" /></svg>
        </TaskButton>
        <SearchBox>
          <svg width="22" height="22" viewBox="0 0 22 22"><circle cx="11" cy="11" r="9" fill="none" stroke="#111" strokeWidth="3" /></svg>
          <input placeholder="Escribe aquí para buscar" aria-label="Buscar" />
          <svg width="13" height="18" viewBox="0 0 13 18" fill="none" stroke="#333" strokeWidth="1.200"><rect x="4" y="1" width="5" height="11" rx="1" /><path d="M1.500 9v5h10V9M6.500 14v3M4 17h5" /></svg>
        </SearchBox>
        <TaskButton $w={50} aria-label="Vista de tareas">
          <svg width="17" height="16" viewBox="0 0 17 16" fill="none" stroke="#fff"><path d="M1.500 0v2.500h9V0M1.500 16v-2.500h9V16M1.500 5h9v6h-9zM14.500 0v3M14.500 9v7" /><path d="M13 4h3v3h-3z" fill="#fff" stroke="none" /></svg>
        </TaskButton>
        <TaskButton aria-label="Chrome">
          <svg width="22" height="22" viewBox="0 0 22 22">
            <circle cx="11" cy="11" r="11" fill="#fcc934" />
            <path d="M11 11L1.500 5.500A11 11 0 0 1 20.500 5.500H11z" fill="#e04a3f" />
            <path d="M1.500 5.500A11 11 0 0 0 11 22l4.800-8.300L11 11z" fill="#1e9d55" />
            <circle cx="11" cy="11" r="5" fill="#fff" /><circle cx="11" cy="11" r="4" fill="#4285f4" />
          </svg>
        </TaskButton>
        <TaskButton aria-label="Explorador">
          <svg width="22" height="20" viewBox="0 0 22 20"><path d="M0 1h9v3h13v13H0z" fill="#e6b94b" /><path d="M0 4h22v13H0z" fill="#ffe08f" /><path d="M4 9h14v9h-4v-4H8v4H4z" fill="#36a9e1" /></svg>
        </TaskButton>
        <TaskButton aria-label="Correo">
          <svg width="24" height="20" viewBox="0 0 24 20"><path d="M0 7l12-7 12 7v12H0z" fill="#fff" /><path d="M0 7h24l-11 6 7 4L8 12z" fill="#0c0808" /></svg>
        </TaskButton>
        <TaskButton aria-label="Word">
          <svg width="22" height="22" viewBox="0 0 22 22"><path d="M12 3h10v16H12z" fill="#fff" /><path d="M14 5.500h6M14 7.500h6M14 9.500h6M14 11.500h6M14 13.500h6M14 15.500h6" stroke="#2b579a" /><path d="M0 2l13-2v22L0 20z" fill="#2b579a" /><path d="M2.500 8L4.300 14 6.500 8l2.200 6L10.500 8" stroke="#fff" strokeWidth="1.500" fill="none" /></svg>
        </TaskButton>
        <TaskButton aria-label="Tienda">
          <svg width="23" height="24" viewBox="0 0 23 24"><path d="M8 6V3q0-2 3.500-2T15 3v3" stroke="#fff" fill="none" strokeWidth="1.300" /><path d="M0 6h23v15l-2 2H2l-2-2z" fill="#fff" /><path d="M6 9h5v5H6z" fill="#f25022" /><path d="M12 9h5v5h-5z" fill="#7fba00" /><path d="M6 15h5v5H6z" fill="#00a4ef" /><path d="M12 15h5v5h-5z" fill="#ffb900" /></svg>
        </TaskButton>
        <TaskButton aria-label="CmapTools">
          <svg width="24" height="14" viewBox="0 0 24 14" fill="none" strokeWidth="2.500"><path d="M13 7C10 14 1.500 14 1.500 7S10 0 13 7" stroke="#4db3c4" /><path d="M13 7c2 5 9.500 5 9.500 0s-7.500-5-9.500 0" stroke="#8fcf86" /></svg>
        </TaskButton>
        <TaskButton aria-label="Dropbox">
          <svg width="24" height="24" viewBox="0 0 24 24"><rect width="24" height="24" rx="3" fill="#fff" /><path d="M8.300 6l3.700 2.300-3.700 2.400-3.700-2.400zM15.700 6l3.700 2.300-3.700 2.400L12 8.300zM8.300 10.700l3.700 2.400-3.700 2.300-3.700-2.300zM15.700 10.700l3.700 2.400-3.700 2.300-3.700-2.300zM12 14l3.500 2.200L12 18.500l-3.500-2.300z" fill="#0061ff" /></svg>
        </TaskButton>
        <TaskButton aria-label="Edge"><FaEdgeLegacy size={22} color="#0078d7" /></TaskButton>
        <TaskButton aria-label="LabVIEW">
          <svg width="24" height="22" viewBox="0 0 24 22"><rect x="2" y="1" width="20" height="20" fill="#3d4a50" stroke="#d5a021" strokeWidth="1.500" /><path d="M0 8h7M0 13h7M17 11h7" stroke="#58a6d8" strokeWidth="1.500" /><path d="M7 4l11 7-11 7z" fill="#f5d04b" stroke="#8b6b12" /><path d="M9 11h4M11 9v4" stroke="#222" strokeWidth="1.500" /><path d="M15 15v4M17.500 15v4h2v-2h-2M17.500 15h2" stroke="#fff" fill="none" /></svg>
        </TaskButton>
        <TaskButton $w={48} $active aria-label="Avast Browser">
          <svg width="22" height="22" viewBox="0 0 22 22">
            <circle cx="11" cy="11" r="11" fill="#f58a1f" />
            <path d="M4 2.500A11 11 0 0 1 22 11c-3-5-10-8-18-8.500z" fill="#7c4dff" />
            <path d="M22 11a11 11 0 0 1-15 10c7-1 11-4 12-14z" fill="#fbc02d" />
            <path d="M11 4c2 1.500 4 2 6.500 2 0 6-2 10-6.500 12-4.500-2-6.500-6-6.500-12C7 6 9 5.500 11 4z" fill="#fff" />
            <circle cx="11" cy="9.500" r="1.700" fill="#345" /><path d="M10.200 9.500h1.600v4h-1.600z" fill="#345" />
          </svg>
        </TaskButton>
        <Tray>
          <TaskButton $w={38} aria-label="Ayuda">
            <svg width="24" height="22" viewBox="0 0 24 22"><circle cx="11" cy="11" r="10" fill="#1493d8" stroke="#fff" strokeWidth="1.500" /><path d="M7.500 8.500c0-5 7.500-4 7 0-.3 2-3.500 2.500-3.500 5M11 15v2" stroke="#fff" strokeWidth="2" fill="none" /><circle cx="19" cy="16" r="5" fill="#f0a81c" /><path d="M19 13v1.500M19 15.500v3.500" stroke="#fff" strokeWidth="1.500" /></svg>
          </TaskButton>
          <TaskButton $w={44} aria-label="Contactos">
            <svg width="15" height="16" viewBox="0 0 15 16" fill="none" stroke="#eee" strokeWidth="1.200"><circle cx="4.500" cy="8" r="2.500" /><path d="M1 15c0-6 7-6 7 0" /><circle cx="10.500" cy="3.500" r="2.500" /><path d="M8 7.500c3-3 6-1 6 3" /></svg>
          </TaskButton>
          <TaskButton $w={26} aria-label="Mostrar iconos ocultos">
            <svg width="12" height="7" viewBox="0 0 12 7"><path d="M.5 6.500L6 1l5.500 5.500" stroke="#fff" strokeWidth="1.300" fill="none" /></svg>
          </TaskButton>
          <TaskButton $w={24} aria-label="Java">
            <svg width="15" height="15" viewBox="0 0 15 15"><rect width="15" height="15" rx="1" fill="#ea7a1c" /><path d="M8 2c2 2-3 3-.5 6M10 4C8 5 8 6 9 8M4 9c2 1 5 1 7 0M5 11h5M3 13h9M11 9c2 0 1 2-1 2" stroke="#fff" fill="none" /></svg>
          </TaskButton>
          <TaskButton $w={24} aria-label="Dropbox"><FaDropbox size={16} /></TaskButton>
          <TaskButton $w={24} aria-label="Volumen">
            <svg width="16" height="14" viewBox="0 0 16 14" fill="none" stroke="#eee"><path d="M.5 4.500H3l3.500-3v11L3 9.500H.5zM8.500 5c1 1 1 3 0 4M10.500 3c2 2 2 6 0 8" /><path d="M13 1c3 3 3 9 0 12" stroke="#777" /></svg>
          </TaskButton>
          <Clock>09:03 p. m.<br />15/05/2019</Clock>
          <TaskButton $w={48} aria-label="Notificaciones">
            <svg width="26" height="26" viewBox="0 0 26 26"><path d="M1 3h16v12H9l-3 3v-3H1z" fill="#fff" /><path d="M3.500 6h11M3.500 9h11M3.500 12h7" stroke="#111" /><circle cx="17" cy="17" r="8" fill="#333" stroke="#888" /><path d="M15 14.500l2.500-1.500v8" stroke="#fff" strokeWidth="1.500" fill="none" /></svg>
          </TaskButton>
          <PeekEdge />
        </Tray>
      </Taskbar>
    </Desktop>
  );
}
